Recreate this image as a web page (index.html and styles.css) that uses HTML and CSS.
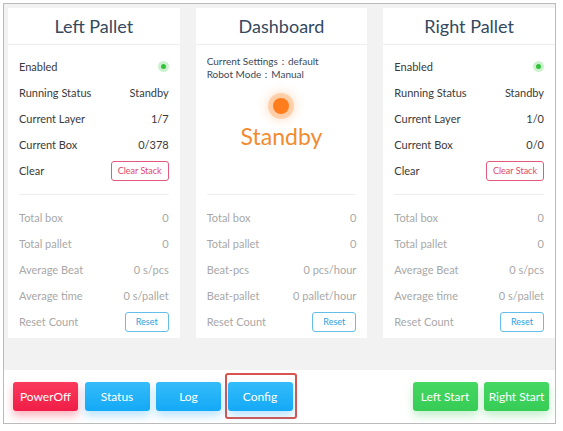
FILE: index.html
```html
<!DOCTYPE html>
<html lang="en">
<head>
    <meta charset="UTF-8">
    <meta name="viewport" content="width=device-width, initial-scale=1.0">
    <title>Pallet Dashboard</title>
    <link rel="stylesheet" href="styles.css">
</head>
<body>
    <div class="frame">
        <div class="cards">
            <div class="card">
                <div class="card-head">Left Pallet</div>
                <div class="card-body">
                    <div class="section">
                        <div class="row"><span>Enabled</span><span class="led"></span></div>
                        <div class="row"><span>Running Status</span><span>Standby</span></div>
                        <div class="row"><span>Current Layer</span><span>1/7</span></div>
                        <div class="row"><span>Current Box</span><span>0/378</span></div>
                        <div class="row"><span>Clear</span><button class="btn-clear">Clear Stack</button></div>
                    </div>
                    <div class="divider"></div>
                    <div class="section muted">
                        <div class="row"><span>Total box</span><span>0</span></div>
                        <div class="row"><span>Total pallet</span><span>0</span></div>
                        <div class="row"><span>Average Beat</span><span>0 s/pcs</span></div>
                        <div class="row"><span>Average time</span><span>0 s/pallet</span></div>
                        <div class="row"><span>Reset Count</span><button class="btn-reset">Reset</button></div>
                    </div>
                </div>
            </div>

            <div class="card">
                <div class="card-head">Dashboard</div>
                <div class="card-body">
                    <div class="section">
                        <div class="info">
                            <p>Current Settings：default</p>
                            <p>Robot Mode：Manual</p>
                        </div>
                        <div class="state">
                            <span class="state-dot"></span>
                            <span class="state-text">Standby</span>
                        </div>
                    </div>
                    <div class="divider"></div>
                    <div class="section muted">
                        <div class="row"><span>Total box</span><span>0</span></div>
                        <div class="row"><span>Total pallet</span><span>0</span></div>
                        <div class="row"><span>Beat-pcs</span><span>0 pcs/hour</span></div>
                        <div class="row"><span>Beat-pallet</span><span>0 pallet/hour</span></div>
                        <div class="row"><span>Reset Count</span><button class="btn-reset">Reset</button></div>
                    </div>
                </div>
            </div>

            <div class="card">
                <div class="card-head">Right Pallet</div>
                <div class="card-body">
                    <div class="section">
                        <div class="row"><span>Enabled</span><span class="led"></span></div>
                        <div class="row"><span>Running Status</span><span>Standby</span></div>
                        <div class="row"><span>Current Layer</span><span>1/0</span></div>
                        <div class="row"><span>Current Box</span><span>0/0</span></div>
                        <div class="row"><span>Clear</span><button class="btn-clear">Clear Stack</button></div>
                    </div>
                    <div class="divider"></div>
                    <div class="section muted">
                        <div class="row"><span>Total box</span><span>0</span></div>
                        <div class="row"><span>Total pallet</span><span>0</span></div>
                        <div class="row"><span>Average Beat</span><span>0 s/pcs</span></div>
                        <div class="row"><span>Average time</span><span>0 s/pallet</span></div>
                        <div class="row"><span>Reset Count</span><button class="btn-reset">Reset</button></div>
                    </div>
                </div>
            </div>
        </div>

        <div class="toolbar">
            <div class="group">
                <button class="btn red">PowerOff</button>
                <button class="btn blue">Status</button>
                <button class="btn blue">Log</button>
                <span class="mark"><button class="btn blue">Config</button></span>
            </div>
            <div class="group">
                <button class="btn green">Left Start</button>
                <button class="btn green">Right Start</button>
            </div>
        </div>
    </div>
</body>
</html>
```

FILE: styles.css
```css
body {
    margin: 0;
    background: #fff;
    font-family: Lato, "Open Sans", sans-serif;
    color: #3a3a3a;
}

.frame {
    margin: 3px 0 0 3px;
    width: 551px;
    height: 419px;
    border: 1px solid #bbb;
    background: #f2f2f2;
    overflow: hidden;
    display: flex;
    flex-direction: column;
}

.cards {
    display: grid;
    grid-template-columns: repeat(3, 1fr);
    gap: 16px;
    padding: 4px 0 0 4px;
    height: 330px;
}

.card {
    background: #fff;
    display: flex;
    flex-direction: column;
}

.card-head {
    height: 36px;
    line-height: 37px;
    text-align: center;
    font-size: 18px;
    color: #34495e;
    border-bottom: 1px solid #eee;
}

.card-body {
    padding: 8px 11px 0 11px;
}

.section {
    height: 131px;
}

.row {
    height: 26.2px;
    display: flex;
    align-items: center;
    justify-content: space-between;
    font-size: 11px;
}

.muted {
    color: #a8a8a8;
}

.divider {
    height: 1px;
    background: #eee;
    margin: 10px 0 9px 0;
}

.led {
    width: 5px;
    height: 5px;
    border-radius: 50%;
    background: #33c13b;
    box-shadow: 0 0 0 3px #cdf1cf;
    margin-right: 3px;
}

.btn-clear,
.btn-reset {
    height: 20px;
    background: #fff;
    border-radius: 3px;
    font-family: inherit;
    font-size: 9px;
    padding: 0;
}

.btn-clear {
    width: 58px;
    border: 1px solid #e45a7c;
    color: #e2476c;
}

.btn-reset {
    width: 44px;
    border: 1px solid #63bfe9;
    color: #2ba1e3;
}

.info {
    padding-top: 2px;
}

.info p {
    margin: 0;
    font-size: 10px;
    line-height: 13px;
    color: #3a4a5a;
}

.state {
    display: flex;
    flex-direction: column;
    align-items: center;
    padding-top: 17px;
}

.state-dot {
    width: 16px;
    height: 16px;
    border-radius: 50%;
    background: #ff7d1c;
    box-shadow: 0 0 0 5px rgba(255, 140, 50, 0.3), 0 0 10px 7px rgba(255, 140, 50, 0.22);
}

.state-text {
    margin-top: 8px;
    font-size: 23px;
    color: #f28b30;
}

.toolbar {
    margin-top: 32px;
    height: 53px;
    background: #fff;
    display: flex;
    justify-content: space-between;
    align-items: flex-start;
    padding: 12px 6px 0 9px;
    box-sizing: border-box;
}

.group {
    display: flex;
    gap: 6.5px;
}

.btn {
    width: 65px;
    height: 29px;
    border: none;
    border-radius: 3px;
    color: #fff;
    font-family: inherit;
    font-size: 12px;
    padding: 0;
}

.red {
    background: linear-gradient(#fb3a5c, #ef1d47);
    box-shadow: 0 5px 8px rgba(240, 40, 75, 0.35);
}

.blue {
    background: linear-gradient(#34bcfa, #14a9f6);
    box-shadow: 0 5px 8px rgba(30, 170, 245, 0.3);
}

.green {
    background: linear-gradient(#45d862, #36cc55);
    box-shadow: 0 5px 8px rgba(60, 205, 90, 0.3);
}

.mark {
    display: flex;
    border: 2px solid #d9534f;
    border-radius: 3px;
    padding: 7px 2px 6px 1px;
    margin: -9px -4px -8px -3px;
}
```
